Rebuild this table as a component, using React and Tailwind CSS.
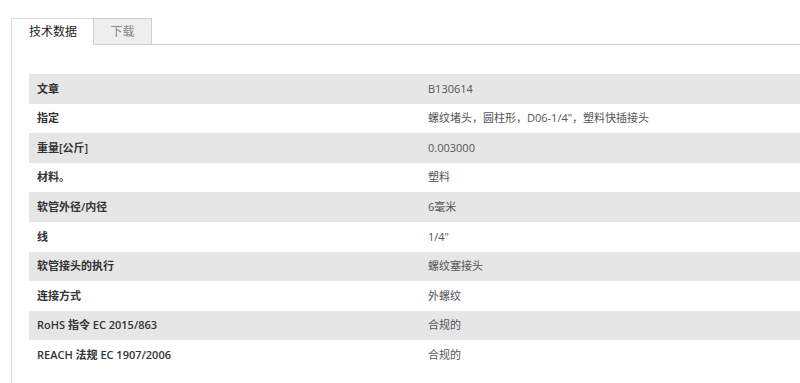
import React from "react";

const rows = [
  ["文章", "B130614"],
  ["指定", "螺纹堵头，圆柱形，D06-1/4\"，塑料快插接头"],
  ["重量[公斤]", "0.003000"],
  ["材料。", "塑料"],
  ["软管外径/内径", "6毫米"],
  ["线", "1/4\""],
  ["软管接头的执行", "螺纹塞接头"],
  ["连接方式", "外螺纹"],
  ["RoHS 指令 EC 2015/863", "合规的"],
  ["REACH 法规 EC 1907/2006", "合规的"],
];

export default function App() {
  return (
    <div
      className="w-[800px] h-[383px] overflow-hidden bg-white pt-[18px] pl-[11px]"
      style={{ fontFamily: '"Open Sans", "Noto Sans CJK SC", sans-serif' }}
    >
      <div className="flex h-[27px]">
        <div className="w-[82px] h-[27px] border-l border-t border-[#d9d9d9] bg-white flex items-center pl-[17px] text-[12px] text-[#222]">
          技术数据
        </div>
        <div className="w-[59px] h-[27px] border border-[#d0d0d0] bg-[#efefef] flex items-center justify-center text-[12px] text-[#888]">
          下载
        </div>
        <div className="flex-1 border-b border-[#d0d0d0]" />
      </div>
      <div className="border-l border-[#d9d9d9] h-[400px] pt-[29px] pl-[17px]">
        {rows.map(([k, v], i) => (
          <div
            key={i}
            className={`flex items-center h-[29.6px] text-[11px] ${i % 2 === 0 ? "bg-[#e6e6e6]" : "bg-white"}`}
          >
            <div className="w-[391px] px-2 font-semibold text-[#333]">{k}</div>
            <div className="px-2 text-[#555]">{v}</div>
          </div>
        ))}
      </div>
    </div>
  );
}
